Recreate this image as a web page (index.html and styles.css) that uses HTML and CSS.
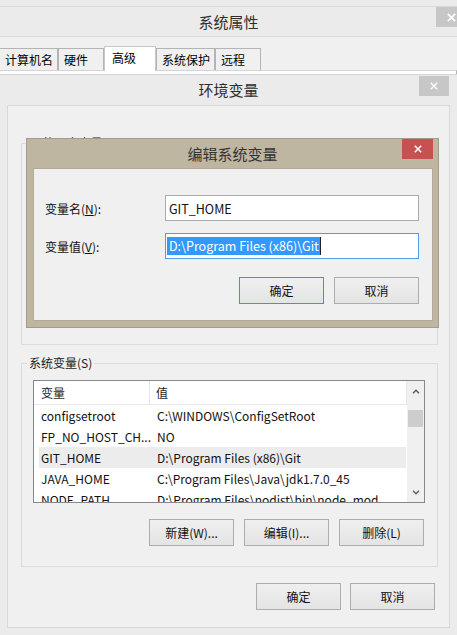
FILE: index.html
```html
<!DOCTYPE html>
<html lang="zh-CN">
<head>
<meta charset="utf-8">
<title>编辑系统变量</title>
<link rel="stylesheet" href="styles.css">
</head>
<body>
  <!-- System properties (background window) -->
  <div class="win sysprops">
    <div class="sp-strip"></div>
    <div class="titlebar sp-title">
      <span class="title">系统属性</span>
      <span class="close close-gray sp-close"><svg viewBox="0 0 10 10" width="9" height="9"><path d="M1 1L9 9M9 1L1 9" stroke="#fff" stroke-width="2"/></svg></span>
    </div>
    <div class="tabs">
      <div class="tab first">计算机名</div>
      <div class="tab">硬件</div>
      <div class="tab active">高级</div>
      <div class="tab">系统保护</div>
      <div class="tab">远程</div>
    </div>
    <div class="tabpanel"></div>
  </div>

  <!-- Environment variables window -->
  <div class="win env">
    <div class="titlebar env-title">
      <span class="title">环境变量</span>
      <span class="close close-gray env-close"><svg viewBox="0 0 10 10" width="8" height="8"><path d="M1 1L9 9M9 1L1 9" stroke="#fff" stroke-width="1.8"/></svg></span>
    </div>
    <div class="client">
      <fieldset class="group user-group">
        <legend>lh 的用户变量(U)</legend>
      </fieldset>

      <fieldset class="group sys-group">
        <legend>系统变量(S)</legend>
        <div class="list">
          <div class="list-body">
            <div class="lv-head"><span class="h1">变量</span><span class="h2">值</span></div>
            <div class="lv-row"><span class="c1">configsetroot</span><span class="c2">C:\WINDOWS\ConfigSetRoot</span></div>
            <div class="lv-row"><span class="c1">FP_NO_HOST_CH...</span><span class="c2">NO</span></div>
            <div class="lv-row selected"><span class="c1">GIT_HOME</span><span class="c2">D:\Program Files (x86)\Git</span></div>
            <div class="lv-row"><span class="c1">JAVA_HOME</span><span class="c2">C:\Program Files\Java\jdk1.7.0_45</span></div>
            <div class="lv-row"><span class="c1">NODE_PATH</span><span class="c2">D:\Program Files\nodist\bin\node_mod...</span></div>
          </div>
          <div class="vscroll">
            <div class="arrow"><svg viewBox="0 0 8 5" width="8" height="5"><path d="M1 4.2L4 1.2L7 4.2" fill="none" stroke="#606060" stroke-width="1.5"/></svg></div>
            <div class="track"><div class="thumb"></div></div>
            <div class="arrow"><svg viewBox="0 0 8 5" width="8" height="5"><path d="M1 0.8L4 3.8L7 0.8" fill="none" stroke="#606060" stroke-width="1.5"/></svg></div>
          </div>
        </div>
        <div class="btnrow group-btns">
          <button class="btn">新建(W)...</button>
          <button class="btn">编辑(I)...</button>
          <button class="btn">删除(L)</button>
        </div>
      </fieldset>

      <div class="btnrow main-btns">
        <button class="btn">确定</button>
        <button class="btn">取消</button>
      </div>
    </div>
  </div>

  <!-- Edit system variable dialog (active) -->
  <div class="win edit">
    <div class="titlebar edit-title">
      <span class="title">编辑系统变量</span>
      <span class="close close-red"><svg viewBox="0 0 10 10" width="8" height="8"><path d="M1 1L9 9M9 1L1 9" stroke="#fff" stroke-width="1.9"/></svg></span>
    </div>
    <div class="edit-client">
      <div class="form">
        <label class="lbl">变量名(<u>N</u>):</label>
        <div class="field"><span class="val">GIT_HOME</span></div>
        <label class="lbl">变量值(<u>V</u>):</label>
        <div class="field focused"><span class="val sel">D:\Program Files (x86)\Git</span><span class="caret"></span></div>
      </div>
      <div class="btnrow edit-btns">
        <button class="btn default">确定</button>
        <button class="btn">取消</button>
      </div>
    </div>
  </div>
</body>
</html>
```

FILE: styles.css
```css
* { box-sizing: border-box; }

html, body { margin: 0; padding: 0; }

body {
  width: 457px;
  height: 635px;
  overflow: hidden;
  position: relative;
  background: #f0f0f0;
  font-family: "Noto Sans CJK SC", sans-serif;
  font-size: 12px;
  color: #000;
}

u { text-decoration: underline; text-underline-offset: 1px; }

.win { position: absolute; }

/* ---------- title bars ---------- */
.titlebar {
  position: relative;
  display: flex;
  align-items: center;
  justify-content: center;
}
.title {
  font-size: 15px;
  color: #2e2e2e;
  line-height: 20px;
}
.close {
  position: absolute;
  display: flex;
  align-items: center;
  justify-content: center;
}
.close-gray { background: #c7c7c7; }
.close-red { background: #c75050; }

/* ---------- System properties ---------- */
.sysprops {
  left: 0;
  top: 0;
  width: 457px;
  height: 110px;
  background: #f0f0f0;
}
.sp-strip {
  height: 7px;
  background: #ebebeb;
  border-bottom: 1px solid #d9d9d9;
}
.sp-title {
  height: 30px;
  background: #ebebeb;
  border-bottom: 1px solid #dadada;
}
.sp-close {
  right: -10px;
  top: 0;
  width: 31px;
  height: 20px;
}
.tabs {
  display: flex;
  align-items: flex-end;
  height: 33px;
  margin-left: -1px;
  position: relative;
  z-index: 1;
}
.tab {
  height: 22px;
  min-width: 46px;
  padding: 0 4px 0 5px;
  border: 1px solid #b4b4b4;
  border-bottom: none;
  background: #f0f0f0;
  line-height: 21px;
  white-space: nowrap;
}
.tab.active {
  height: 25px;
  min-width: 52px;
  padding: 2px 6px 0 7px;
  line-height: 17px;
  background: #fff;
  border-color: #c8c8c8;
  margin-bottom: -1px;
}
.tabpanel {
  height: 40px;
  background: #fff;
  border-top: 1px solid #d4d4d4;
  border-right: 1px solid #b4b4b4;
}

/* ---------- Environment variables window ---------- */
.env {
  left: 0;
  top: 74px;
  width: 457px;
  height: 570px;
  background: #ebebeb;
  border-top: 1px solid #d6d6d6;
}
.env-title {
  height: 30px;
}
.env-close {
  right: 8px;
  top: 1px;
  width: 30px;
  height: 20px;
}
.client {
  margin: 0 7px;
  height: 523px;
  background: #f0f0f0;
  border: 1px solid #d9d9d9;
  display: flex;
  flex-direction: column;
}

.group {
  margin: 0 11px 0 13px;
  padding: 0;
  border: 1px solid #dcdcdc;
  min-width: 0;
}
.group legend {
  margin-left: 5px;
  padding: 0 2px;
  line-height: 14px;
  font-size: 12px;
  color: #1a1a1a;
}
.user-group {
  margin-top: 30px;
  height: 209px;
}
.sys-group {
  margin-top: 11px;
  height: 211px;
  display: flex;
  flex-direction: column;
}

/* list view */
.list {
  margin: 10px 0 0 11px;
  width: 392px;
  height: 123px;
  border: 1px solid #828790;
  background: #fff;
  display: flex;
  overflow: hidden;
}
.list-body {
  flex: 1;
  overflow: hidden;
}
.lv-head {
  display: flex;
  height: 24px;
  line-height: 23px;
  border-bottom: 1px solid #e8e8e8;
  border-right: 1px solid #e8e8e8;
  color: #1e1e1e;
}
.lv-head .h1 {
  width: 116px;
  padding-left: 7px;
  border-right: 1px solid #e5e5e5;
}
.lv-head .h2 { padding-left: 6px; }
.lv-row {
  display: flex;
  height: 21px;
  line-height: 21px;
  margin: 0 1px 0 5px;
  white-space: nowrap;
  color: #111;
}
.lv-row .c1 {
  width: 116px;
  flex: none;
  padding-left: 2px;
  overflow: hidden;
}
.lv-row .c2 {
  padding-left: 2px;
  overflow: hidden;
}
.lv-row.selected { background: #ececec; }

.vscroll {
  width: 17px;
  flex: none;
  background: #f0f0f0;
  display: flex;
  flex-direction: column;
}
.vscroll .arrow {
  height: 17px;
  display: flex;
  align-items: center;
  justify-content: center;
  padding-top: 3px;
}
.vscroll .arrow:last-child { padding-top: 0; padding-bottom: 2px; }
.vscroll .track {
  flex: 1;
  padding: 12px 1px 0 1px;
}
.vscroll .thumb {
  height: 17px;
  background: #cdcdcd;
}

/* buttons */
.btnrow {
  display: flex;
  justify-content: flex-end;
}
.btn {
  width: 85px;
  height: 27px;
  margin: 0;
  padding: 0;
  font-family: inherit;
  font-size: 12px;
  color: #111;
  background: linear-gradient(#efefef, #e4e4e4);
  border: 1px solid #adadad;
  border-radius: 0;
  line-height: 25px;
}
.btn.default { border-color: #3c93e4; }

.group-btns {
  margin-top: 16px;
  gap: 10px;
  padding-right: 13px;
}
.main-btns {
  margin-top: 16px;
  gap: 9px;
  padding-right: 14px;
}

/* ---------- Edit dialog ---------- */
.edit {
  left: 26px;
  top: 138px;
  width: 413px;
  height: 190px;
  background: #bfb6a2;
  border: 1px solid #a49c88;
}
.edit-title {
  height: 29px;
}
.edit-title .title { color: #333; }
.edit-title .close {
  right: 5px;
  top: 0;
  width: 31px;
  height: 20px;
}
.edit-client {
  margin: 0 5px 0 6px;
  height: 153px;
  background: #f0f0f0;
  border: 1px solid #b3ab98;
  padding: 26px 13px 0 11px;
}
.form {
  display: grid;
  grid-template-columns: 120px 254px;
  grid-auto-rows: 26px;
  row-gap: 12px;
  align-items: center;
}
.lbl { color: #111; }
.field {
  height: 26px;
  background: #fff;
  border: 1px solid #acacac;
  display: flex;
  align-items: center;
  padding-left: 1px;
  font-size: 12.5px;
  color: #111;
}
.field .val { padding-left: 2px; }
.field.focused { border-color: #569de5; }
.field .sel {
  background: #3399ff;
  color: #fff;
  line-height: 18px;
  padding-right: 1px;
}
.caret {
  width: 1px;
  height: 18px;
  background: #222;
}
.edit-btns {
  margin-top: 18px;
  gap: 10px;
}
```
